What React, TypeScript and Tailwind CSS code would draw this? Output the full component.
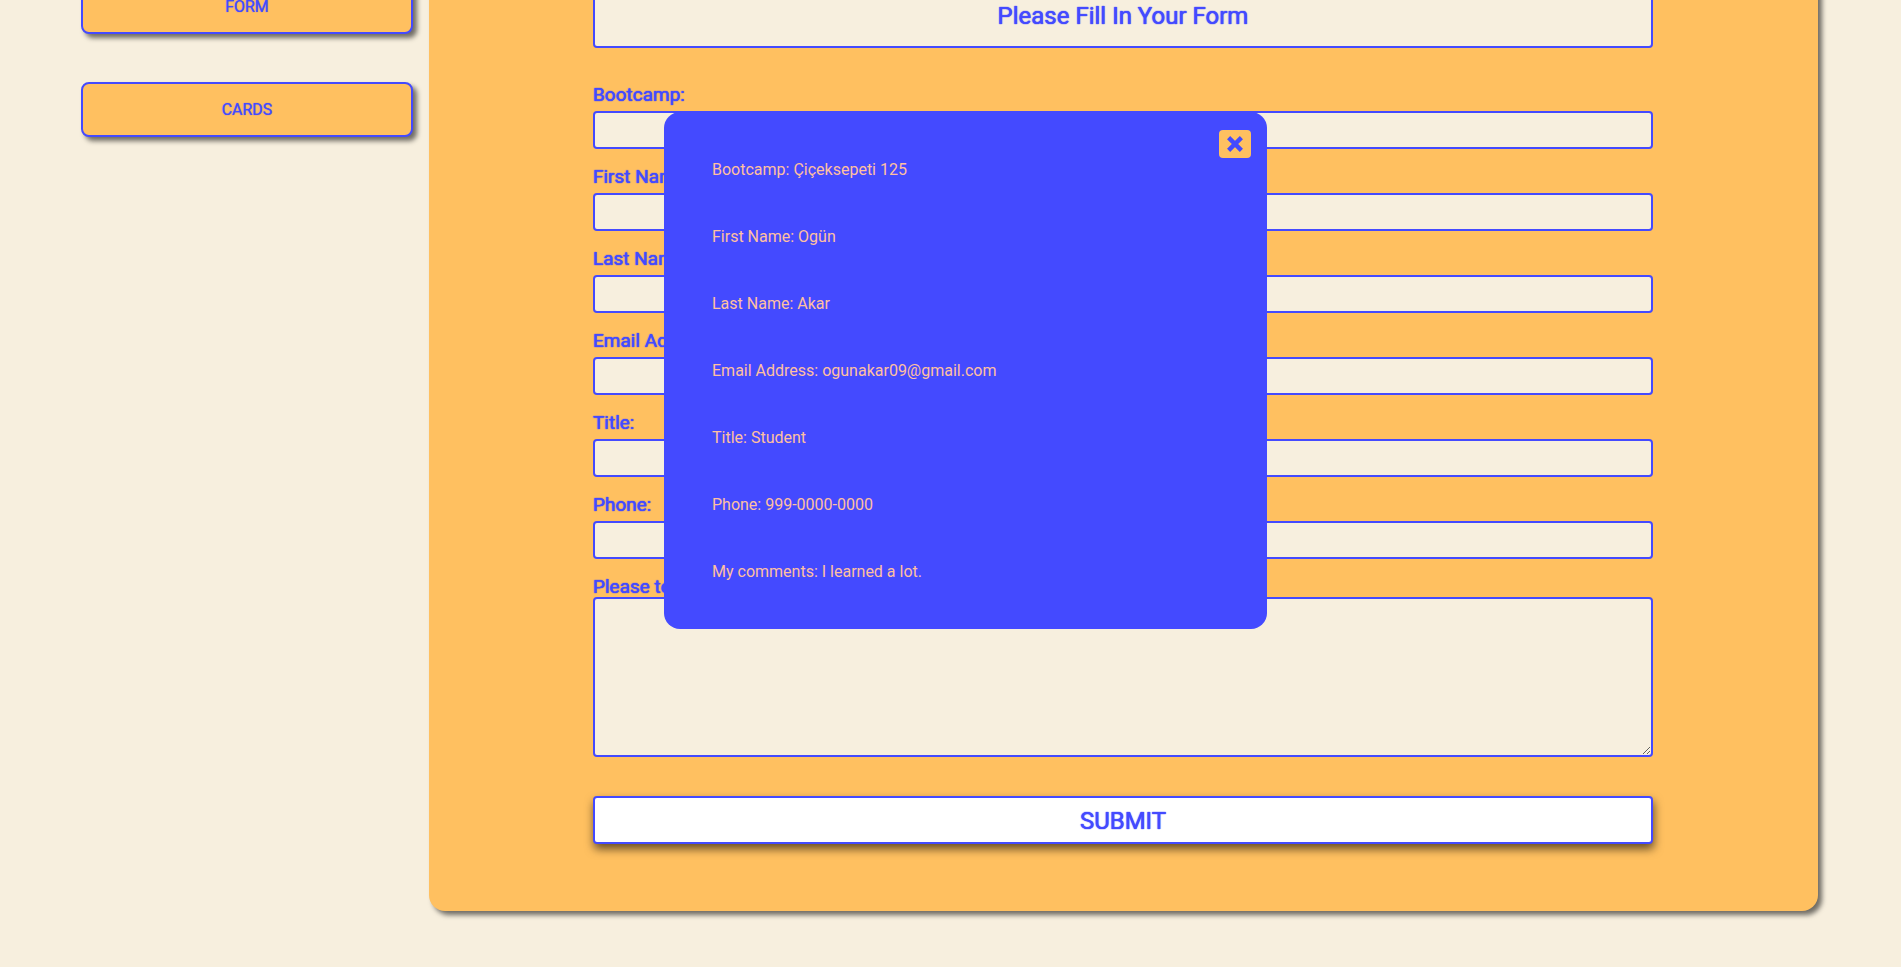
import { useState } from "react";

const navItems = ["FORM", "CARDS"];

const fields = [
  { id: "bootcamp", label: "Bootcamp:", type: "text" },
  { id: "first-name", label: "First Name:", type: "text" },
  { id: "last-name", label: "Last Name:", type: "text" },
  { id: "email", label: "Email Address:", type: "email" },
  { id: "title", label: "Title:", type: "text" },
  { id: "phone", label: "Phone:", type: "tel" },
];

const summary = [
  "Bootcamp: Çiçeksepeti 125",
  "First Name: Ogün",
  "Last Name: Akar",
  "Email Address: ogunakar09@gmail.com",
  "Title: Student",
  "Phone: 999-0000-0000",
  "My comments: I learned a lot.",
];

function Sidebar() {
  return (
    <nav className="flex w-[332px] shrink-0 flex-col gap-12 pt-[75px]">
      {navItems.map((item) => (
        <a
          key={item}
          href={`#${item.toLowerCase()}`}
          className="flex h-[55px] items-center justify-center rounded-lg border-2 border-[#444aff] bg-[#ffc060] text-base shadow-[4px_4px_5px_rgba(0,0,0,0.55)] [text-shadow:0_0_1px_#444aff]"
        >
          {item}
        </a>
      ))}
    </nav>
  );
}

function CrossIcon() {
  return (
    <svg width="16" height="16" viewBox="0 0 16 16" fill="none" stroke="currentColor" strokeWidth="4.4" aria-hidden="true">
      <path d="M1.600 1.600 14.400 14.400M14.400 1.600 1.600 14.400" />
    </svg>
  );
}

function SummaryModal({ onClose }: { onClose: () => void }) {
  return (
    <div className="pointer-events-none fixed inset-0 flex items-start justify-center pt-28 pl-[30px]">
      <div
        role="dialog"
        aria-label="Submitted form"
        className="pointer-events-auto relative w-[603px] rounded-2xl bg-[#444aff] px-12 py-6 text-base text-[#ffc0a0]"
      >
        <button
          type="button"
          aria-label="Close"
          onClick={onClose}
          className="absolute top-[18px] right-4 flex h-7 w-8 items-center justify-center rounded-sm bg-[#ffc060] text-[#444aff]"
        >
          <CrossIcon />
        </button>
        {summary.map((line) => (
          <p key={line} className="flex h-[67px] items-center">
            {line}
          </p>
        ))}
      </div>
    </div>
  );
}

export default function App() {
  const [open, setOpen] = useState(true);

  return (
    <div className="min-h-screen overflow-hidden bg-[#f7efde] font-['Roboto',sans-serif] text-[#444aff]">
      <div className="-mt-24 flex gap-4 pr-[83px] pb-14 pl-[81px]">
        <Sidebar />
        <main className="flex-1 rounded-2xl bg-[#ffc060] pt-20 pr-[165px] pb-[67px] pl-[164px] shadow-[4px_4px_5px_rgba(0,0,0,0.55)]">
          <h1 className="flex h-16 items-center justify-center rounded border-2 border-[#444aff] bg-[#f7efde] text-2xl [text-shadow:0_0_1px_#444aff,0_0_1px_#444aff]">
            Please Fill In Your Form
          </h1>
          <form
            className="mt-9"
            onSubmit={(e) => {
              e.preventDefault();
              setOpen(true);
            }}
          >
            {fields.map((field) => (
              <div key={field.id} className="mb-[17px] flex flex-col gap-[5px]">
                <label htmlFor={field.id} className="text-[19px] leading-[22px] [text-shadow:0_0_1px_#444aff,0_0_1px_#444aff]">
                  {field.label}
                </label>
                <input
                  id={field.id}
                  type={field.type}
                  className="h-[38px] w-full rounded border-2 border-[#444aff] bg-[#f7efde] px-3"
                />
              </div>
            ))}
            <label htmlFor="comments" className="block text-[19px] leading-[21px] [text-shadow:0_0_1px_#444aff,0_0_1px_#444aff]">
              Please tell us your comments:
            </label>
            <textarea
              id="comments"
              className="block h-40 w-full rounded border-2 border-[#444aff] bg-[#f7efde] p-3"
            />
            <button
              type="submit"
              className="mt-[39px] h-12 w-full rounded border-2 border-[#444aff] bg-white pt-0.5 text-2xl shadow-[1px_5px_10px_rgba(0,0,0,0.6)] [text-shadow:0_0_1px_#444aff,0_0_1px_#444aff]"
            >
              SUBMIT
            </button>
          </form>
        </main>
      </div>
      {open && <SummaryModal onClose={() => setOpen(false)} />}
    </div>
  );
}
